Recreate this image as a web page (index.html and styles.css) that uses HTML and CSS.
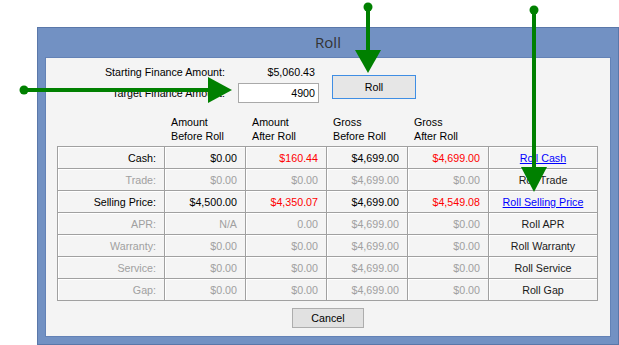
FILE: index.html
```html
<!DOCTYPE html>
<html lang="en">

<head>
    <meta charset="UTF-8">
    <meta name="viewport" content="width=device-width, initial-scale=1.0">
    <title>Roll</title>
    <link rel="stylesheet" href="styles.css">
</head>

<body>
    <div class="window">
        <div class="titlebar">Roll</div>
        <div class="client">
            <div class="amounts">
                <span class="label row-1">Starting Finance Amount:</span>
                <span class="value row-1">$5,060.43</span>
                <button class="btn btn-roll">Roll</button>
                <span class="label row-2">Target Finance Amount:</span>
                <input class="target row-2" type="text" value="4900">
            </div>

            <div class="heads">
                <div></div>
                <div>Amount<br>Before Roll</div>
                <div>Amount<br>After Roll</div>
                <div>Gross<br>Before Roll</div>
                <div>Gross<br>After Roll</div>
                <div></div>
            </div>

            <table class="rolls">
                <colgroup>
                    <col class="c-label">
                    <col class="c-num">
                    <col class="c-num">
                    <col class="c-num">
                    <col class="c-num">
                    <col class="c-act">
                </colgroup>
                <tr>
                    <td>Cash:</td>
                    <td>$0.00</td>
                    <td class="neg">$160.44</td>
                    <td>$4,699.00</td>
                    <td class="neg">$4,699.00</td>
                    <td class="act"><a href="#">Roll Cash</a></td>
                </tr>
                <tr class="off">
                    <td>Trade:</td>
                    <td>$0.00</td>
                    <td>$0.00</td>
                    <td>$4,699.00</td>
                    <td>$0.00</td>
                    <td class="act">Roll Trade</td>
                </tr>
                <tr>
                    <td>Selling Price:</td>
                    <td>$4,500.00</td>
                    <td class="neg">$4,350.07</td>
                    <td>$4,699.00</td>
                    <td class="neg">$4,549.08</td>
                    <td class="act"><a href="#">Roll Selling Price</a></td>
                </tr>
                <tr class="off">
                    <td>APR:</td>
                    <td>N/A</td>
                    <td>0.00</td>
                    <td>$4,699.00</td>
                    <td>$0.00</td>
                    <td class="act">Roll APR</td>
                </tr>
                <tr class="off">
                    <td>Warranty:</td>
                    <td>$0.00</td>
                    <td>$0.00</td>
                    <td>$4,699.00</td>
                    <td>$0.00</td>
                    <td class="act">Roll Warranty</td>
                </tr>
                <tr class="off">
                    <td>Service:</td>
                    <td>$0.00</td>
                    <td>$0.00</td>
                    <td>$4,699.00</td>
                    <td>$0.00</td>
                    <td class="act">Roll Service</td>
                </tr>
                <tr class="off">
                    <td>Gap:</td>
                    <td>$0.00</td>
                    <td>$0.00</td>
                    <td>$4,699.00</td>
                    <td>$0.00</td>
                    <td class="act">Roll Gap</td>
                </tr>
            </table>

            <div class="footer">
                <button class="btn btn-cancel">Cancel</button>
            </div>
        </div>
    </div>

    <!-- callout arrows drawn over the dialog -->
    <svg class="arrows" width="619" height="345" viewBox="0 0 619 345">
        <g fill="#008000" stroke="#008000">
            <circle cx="24" cy="90" r="4.5" stroke="none"></circle>
            <line x1="24" y1="90" x2="210" y2="90" stroke-width="4"></line>
            <polygon points="208,77 232,90 208,103" stroke="none"></polygon>

            <circle cx="368" cy="7" r="4.5" stroke="none"></circle>
            <line x1="368" y1="7" x2="368" y2="52" stroke-width="4"></line>
            <polygon points="355,50 381,50 368,73" stroke="none"></polygon>

            <circle cx="534" cy="10" r="4.5" stroke="none"></circle>
            <line x1="534" y1="10" x2="534" y2="169" stroke-width="4"></line>
            <polygon points="521,167 547,167 534,192" stroke="none"></polygon>
        </g>
    </svg>
</body>

</html>
```

FILE: styles.css
```css
* {
    padding: 0;
    margin: 0;
    box-sizing: border-box;
}

body {
    width: 619px;
    height: 345px;
    overflow: hidden;
    background: #fff;
    font-family: "Liberation Sans", Arial, sans-serif;
    font-size: 10.7px;
    color: #000;
    padding-top: 27px;
    padding-left: 37px;
}

.window {
    width: 582px;
    height: 318px;
    background: #7291c3;
    border: 1px solid #5a77a9;
    display: flex;
    flex-direction: column;
}

.titlebar {
    height: 29px;
    line-height: 29px;
    text-align: center;
    font-family: "Open Sans", "Noto Sans", sans-serif;
    font-size: 15px;
    color: #333;
}

.client {
    flex: 1;
    margin: 0 7px 7px;
    background: #f4f4f4;
    border: 1px solid #6382b6;
}

/* finance amounts + roll button */
.amounts {
    display: grid;
    grid-template-columns: 179px 81px 84px;
    grid-template-rows: 13px 20px;
    column-gap: 13px;
    row-gap: 4px;
    padding-top: 8px;
    line-height: 13px;
}

.label {
    text-align: right;
    align-self: center;
}

.value {
    text-align: right;
    padding-right: 4px;
}

.row-1 {
    grid-row: 1;
}

.row-2 {
    grid-row: 2;
}

.target {
    height: 20px;
    border: 1px solid #a9a9a9;
    background: #fff;
    font: inherit;
    text-align: right;
    padding-right: 3px;
    outline: none;
}

.btn {
    font: inherit;
    color: #000;
    background: #e1e1e1;
    border: 1px solid #adadad;
}

.btn-roll {
    grid-column: 3;
    grid-row: 1 / span 2;
    height: 24px;
    margin-top: 9px;
    align-self: start;
    border-color: #3f8ee4;
    background: #e6e6e6;
}

/* column headings */
.heads {
    display: grid;
    grid-template-columns: 107px 81px 81px 81px 81px 109px;
    margin: 12px 0 3px 11px;
    line-height: 14px;
}

.heads div {
    padding-left: 7px;
}

/* roll table */
.rolls {
    margin-left: 11px;
    width: 540px;
    table-layout: fixed;
    border-collapse: collapse;
}

.c-label {
    width: 107px;
}

.c-num {
    width: 81px;
}

.c-act {
    width: 109px;
}

.rolls td {
    height: 22px;
    border: 1px solid #a0a0a0;
    box-shadow: inset 1px 1px 0 #fff;
    text-align: right;
    padding: 0 8px 0 0;
    white-space: nowrap;
}

.rolls td.act {
    text-align: center;
    padding: 0;
    color: #1a1a1a;
}

.rolls .off td {
    color: #a0a0a0;
}

.rolls .off td.act {
    color: #1a1a1a;
}

.rolls td.neg {
    color: #f00;
}

.act a {
    color: #00f;
}

.footer {
    display: flex;
    justify-content: center;
    padding-top: 7px;
}

.btn-cancel {
    width: 72px;
    height: 20px;
}

.arrows {
    position: absolute;
    top: 0;
    left: 0;
    pointer-events: none;
}
```
